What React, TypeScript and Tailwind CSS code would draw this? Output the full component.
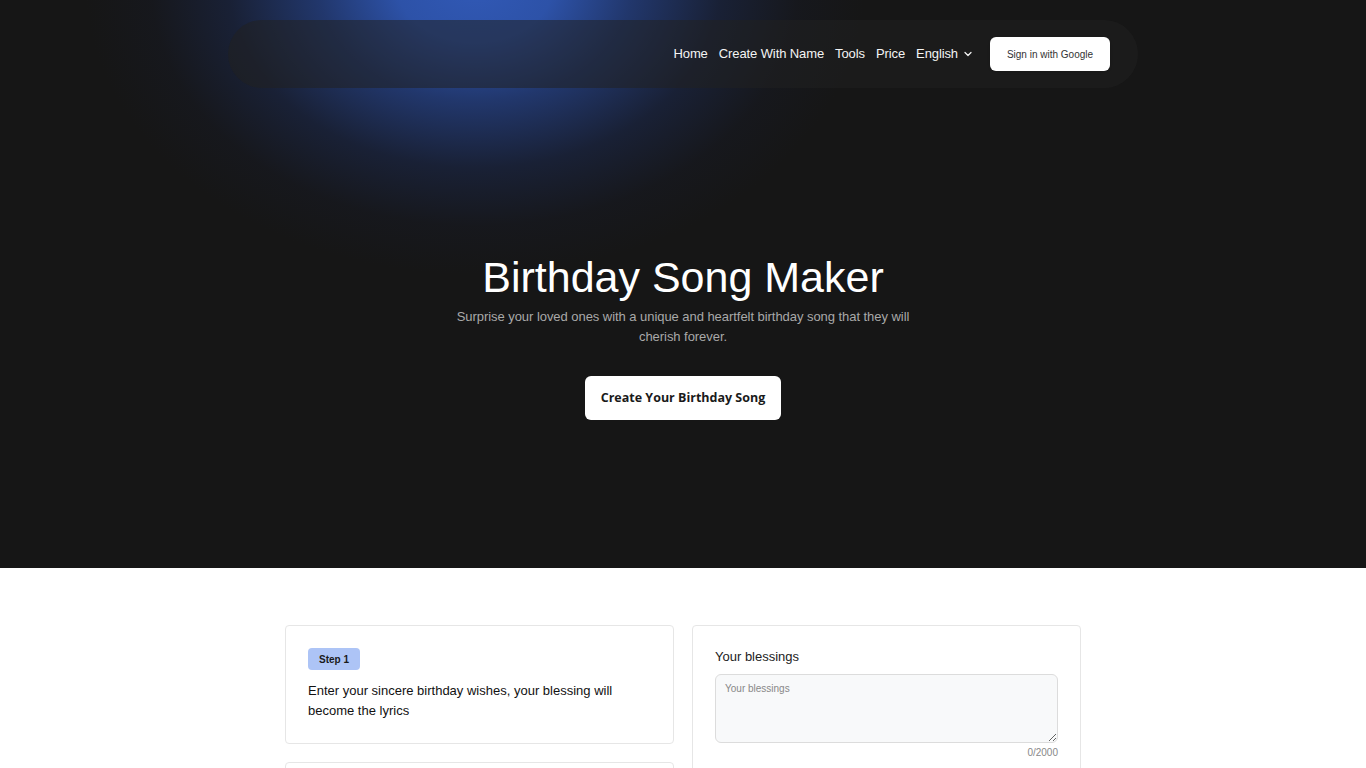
import { ChevronDown } from 'lucide-react';

const navLinks = ["Home", "Create With Name", "Tools", "Price"];

const Header = () => {
    return (
        <header className="relative z-10 pt-5">
            <nav className="mx-auto flex h-[68px] w-[910px] items-center justify-end rounded-full bg-[rgba(32,32,32,0.55)] pr-[28px]">
                <div className="flex items-center gap-[11px] text-[13px] tracking-[-0.1px] text-[#f4f4f4]">
                    {navLinks.map((link) => (
                        <a key={link} href="#" className="hover:text-white">
                            {link}
                        </a>
                    ))}
                    <button className="flex items-center gap-[4px] text-[13px] text-[#f4f4f4]">
                        English
                        <ChevronDown size={12} strokeWidth={2.5} />
                    </button>
                </div>
                <button className="ml-[16px] h-[34px] w-[120px] rounded-md bg-white text-[10px] text-[#333] shadow-sm">
                    Sign in with Google
                </button>
            </nav>
        </header>
    );
};

const Hero = () => {
    return (
        <section className="relative z-10 flex flex-col items-center pt-[165px]">
            <h1 className="text-[43px] leading-[48px] text-white">Birthday Song Maker</h1>
            <p className="mt-[6px] w-[470px] text-center text-[13px] leading-5 tracking-[-0.05px] text-[#a9a9a9]">
                Surprise your loved ones with a unique and heartfelt birthday song that they will cherish forever.
            </p>
            <button className="mt-[29px] h-[44px] w-[196px] rounded-md bg-white font-['Open_Sans',sans-serif] text-[12.5px] font-bold text-[#1a1a1a]">
                Create Your Birthday Song
            </button>
        </section>
    );
};

const App = () => {
    return (
        <div className="min-h-screen bg-white font-['Liberation_Sans',Arial,sans-serif]">
            <div className="relative h-[568px] overflow-hidden bg-[#161616]">
                {/* blue glow behind the nav */}
                <div className="pointer-events-none absolute inset-0 bg-[radial-gradient(ellipse_390px_290px_at_475px_-15px,#3159b6_0%,#2d52a8_20%,rgba(38,68,142,0.72)_40%,rgba(30,50,105,0.38)_63%,rgba(25,35,70,0.14)_83%,rgba(22,22,22,0)_100%)]"></div>
                <Header />
                <Hero />
            </div>

            <section className="pt-[57px]">
                <div className="mx-auto grid w-[796px] grid-cols-2 items-start gap-[18px]">
                    <div className="flex flex-col gap-[18px]">
                        <div className="rounded-[4px] border border-[#e6e6e6] p-[22px]">
                            <span className="flex h-[22px] w-fit items-center rounded-[4px] bg-[#adc4f6] px-[11px] text-[10px] font-bold text-[#1a1a1a]">
                                Step 1
                            </span>
                            <p className="mt-[11px] pr-6 text-[13px] leading-5 text-[#111]">
                                Enter your sincere birthday wishes, your blessing will become the lyrics
                            </p>
                        </div>
                        <div className="rounded-[4px] border border-[#e6e6e6] p-[22px]">
                            <span className="flex h-[22px] w-fit items-center rounded-[4px] bg-[#adc4f6] px-[11px] text-[10px] font-bold text-[#1a1a1a]">
                                Step 2
                            </span>
                            <p className="mt-[11px] text-[13px] leading-5 text-[#111]">
                                Choose a music style for the song
                            </p>
                        </div>
                    </div>

                    <div className="rounded-[4px] border border-[#e6e6e6] px-[22px] pt-[21px] pb-6">
                        <label className="block text-[13px] leading-5 text-[#222]">Your blessings</label>
                        <textarea
                            placeholder="Your blessings"
                            className="mt-[7px] block h-[69px] w-full rounded-md border border-[#dcdcdc] bg-[#f8f9fa] px-[9px] py-[6px] text-[10px] text-[#333] placeholder:text-[#888] focus:outline-none"
                        ></textarea>
                        <div className="mt-[3px] text-right text-[10px] leading-[14px] text-[#888]">0/2000</div>
                    </div>
                </div>
            </section>
        </div>
    );
};

export default App;
